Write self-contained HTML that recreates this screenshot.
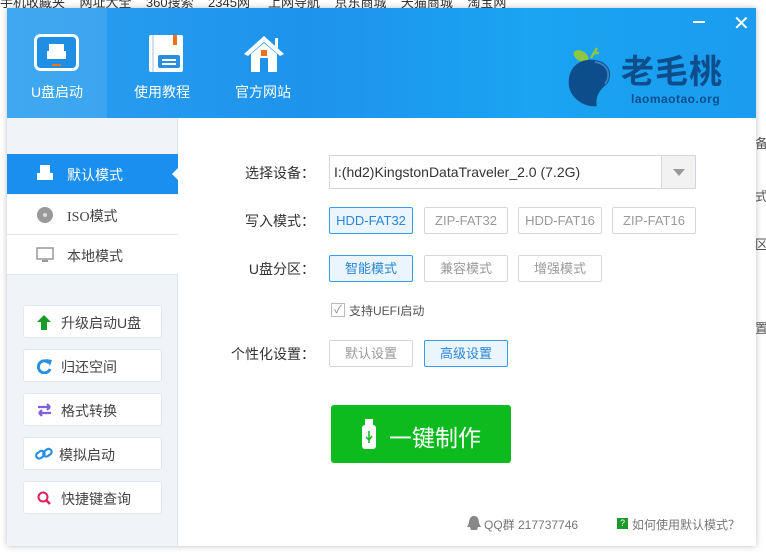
<!DOCTYPE html>
<html><head><meta charset="utf-8">
<style>
*{box-sizing:border-box;margin:0;padding:0}
body{width:766px;height:556px;overflow:hidden;background:#fff;font-family:"Liberation Sans","Noto Sans CJK SC",sans-serif;position:relative;color:#333}
.bm{position:absolute;top:-8px;left:0;font-size:13px;color:#333;white-space:nowrap}
.win{position:absolute;left:7px;top:8px;width:749px;height:538px;background:#fff;box-shadow:0 0 6px rgba(0,0,0,.25)}
.hdr{position:absolute;left:0;top:0;width:749px;height:110px;background:linear-gradient(90deg,#2a9ff0,#1e93ec 40%,#1aa4f2 70%,#1b9cef)}
.tab{position:absolute;top:0;width:100px;height:110px;color:#fff;font-size:14px;text-align:center}
.tab span{position:absolute;top:74px;left:0;width:100%}
.side{position:absolute;left:0;top:110px;width:171px;height:428px;background:#f0f3f8;border-right:1px solid #dde3ea}
.mi{position:absolute;left:0;width:171px;height:40px;background:#fff;border-bottom:1px solid #e3e6ea;font-size:14px;color:#444}
.mi span{position:absolute;left:60px;top:11px}
.mi.act{background:#1b8fee;color:#fff;border:none}
.sb{position:absolute;left:16px;width:139px;height:33px;background:#fff;border:1px solid #e3e7ec;border-radius:3px;font-size:14px;color:#444}
.sb span{position:absolute;left:37px;top:7px}
.sb svg{position:absolute;left:13px;top:9px}
.lbl{position:absolute;font-size:14px;color:#333;text-align:right;width:110px}
.btn{position:absolute;height:27px;border:1px solid #d4d8dc;border-radius:2px;font-size:13px;color:#999;text-align:center;line-height:25px;background:#fff}
.btn.on{border-color:#3a9be8;background:#eaf5fd;color:#2a85d6}
</style></head><body>
<div class="bm">手机收藏夹 &nbsp;&nbsp;&nbsp;网址大全 &nbsp;&nbsp;&nbsp;360搜索 &nbsp;&nbsp;&nbsp;2345网 &nbsp;&nbsp;&nbsp;&nbsp;上网导航 &nbsp;&nbsp;&nbsp;京东商城 &nbsp;&nbsp;&nbsp;天猫商城 &nbsp;&nbsp;&nbsp;淘宝网</div>
<div style="position:absolute;left:755px;top:137px;font-size:13px;color:#555;line-height:13px">备</div>
<div style="position:absolute;left:755px;top:186px;font-size:13px;color:#555">式</div>
<div style="position:absolute;left:755px;top:234px;font-size:13px;color:#555">区</div>
<div style="position:absolute;left:755px;top:318px;font-size:13px;color:#555">置</div>
<div class="win">
<div class="hdr">
 <div class="tab" style="left:0;background:rgba(255,255,255,.1)">
  <svg style="position:absolute;left:27px;top:26px" width="45" height="38"><rect x="1.5" y="1.5" width="42" height="34" rx="5" fill="#1f8fe6" stroke="#fff" stroke-width="3"/><rect x="15" y="10" width="15" height="7" fill="#fff"/><rect x="13" y="17" width="19" height="8" fill="#fff"/><rect x="18" y="30" width="9" height="2" fill="#f07020"/></svg>
  <span>U盘启动</span></div>
 <div class="tab" style="left:105px">
  <svg style="position:absolute;left:37px;top:27px" width="34" height="37"><rect x="0" y="0" width="34" height="37" rx="2" fill="#fff"/><rect x="3" y="0" width="2" height="37" fill="#cfe0f0"/><rect x="24" y="0" width="4" height="10" fill="#f07020"/><rect x="9" y="20" width="22" height="13" rx="2" fill="#2a8fe0"/><rect x="13" y="24" width="14" height="2" fill="#fff"/><rect x="13" y="28" width="14" height="2" fill="#fff"/></svg>
  <span>使用教程</span></div>
 <div class="tab" style="left:206px">
  <svg style="position:absolute;left:29px;top:24px" width="44" height="42"><path d="M22 4 L2 22 L6 24 L22 10 L38 24 L42 22 Z" fill="#fff"/><rect x="33" y="6" width="3" height="10" fill="#fff"/><path d="M9 22 L22 11 L35 22 V40 H9Z" fill="#fff"/><rect x="18" y="26" width="8" height="14" fill="#1e93ec"/><rect x="19" y="18" width="6" height="6" fill="#f07020"/></svg>
  <span>官方网站</span></div>
 <div style="position:absolute;left:686px;top:13px;width:12px;height:2px;background:#fff"></div>
 <div style="position:absolute;left:726px;top:3px;color:#fff;font-size:20px">✕</div>
 <svg style="position:absolute;left:558px;top:32px" width="56" height="70"><ellipse cx="16" cy="16" rx="8" ry="5" fill="#8dc63f" transform="rotate(30 16 16)"/><path d="M26 18 L32 8 M29 13 L34 13" stroke="#8dc63f" stroke-width="2.5"/><path d="M30 20 C12 18 2 30 4 46 C6 60 22 68 32 66 C30 58 34 50 42 44 C48 36 46 22 30 20Z" fill="#0e4d8c"/><path d="M30 22 C44 24 46 36 40 44" stroke="#3a7fc0" stroke-width="2" fill="none"/></svg>
 <div style="position:absolute;left:614px;top:44px;color:#0e4d8c;font-size:33px;font-weight:bold;letter-spacing:1px;line-height:40px">老毛桃</div>
 <div style="position:absolute;left:624px;top:84px;color:#0e4d8c;font-size:12px;font-weight:bold;letter-spacing:.5px">laomaotao.org</div>
</div>
<div class="side">
 <div class="mi act" style="top:36px;height:40px"><svg style="position:absolute;left:29px;top:11px" width="18" height="17"><rect x="4" y="0" width="10" height="8" fill="#fff"/><rect x="1" y="8" width="16" height="7" fill="#fff"/></svg><span>默认模式</span><div style="position:absolute;right:0;top:14px;border:6px solid transparent;border-right-color:#fff;border-width:6px 6px 6px 0;"></div></div>
 <div class="mi" style="top:77px"><svg style="position:absolute;left:30px;top:12px" width="16" height="16"><circle cx="8" cy="8" r="8" fill="#999"/><circle cx="8" cy="8" r="2" fill="#ddd"/></svg><span style="font-family:'Liberation Serif','Noto Sans CJK SC',serif">ISO<span style="position:static;font-family:'Liberation Sans','Noto Sans CJK SC',sans-serif">模式</span></span></div>
 <div class="mi" style="top:117px"><svg style="position:absolute;left:29px;top:12px" width="18" height="16"><rect x="1" y="1" width="16" height="11" fill="none" stroke="#999" stroke-width="1.5"/><rect x="6" y="13" width="6" height="2" fill="#999"/></svg><span>本地模式</span></div>
 <div class="sb" style="top:187px"><svg width="14" height="15"><path d="M7 0 L14 7 H10 V15 H4 V7 H0Z" fill="#1a9a2a"/></svg><span>升级启动U盘</span></div>
 <div class="sb" style="top:231px"><svg width="15" height="15"><path d="M12 4 A6 6 0 1 0 13 10" stroke="#2a8fe0" stroke-width="3" fill="none"/><path d="M9 0 L15 1 L13 7Z" fill="#2a8fe0"/></svg><span>归还空间</span></div>
 <div class="sb" style="top:275px"><svg width="15" height="14"><path d="M1 4 H13 M10 1 L13 4 M14 10 H2 M5 7 L2 10 M5 13 L2 10 M10 7 L13 4" stroke="#8060d8" stroke-width="2.2" fill="none"/></svg><span>格式转换</span></div>
 <div class="sb" style="top:319px"><svg style="left:11px" width="18" height="14"><g stroke="#2a8fe0" stroke-width="2.2" fill="none"><rect x="1" y="5" width="9" height="6" rx="3" transform="rotate(-35 5 8)"/><rect x="8" y="3" width="9" height="6" rx="3" transform="rotate(-35 12 6)"/></g></svg><span style="left:35px">模拟启动</span></div>
 <div class="sb" style="top:363px"><svg width="14" height="14"><circle cx="6" cy="6" r="4.5" stroke="#e0205a" stroke-width="2" fill="none"/><path d="M9 9 L13 13" stroke="#e0205a" stroke-width="2.5"/></svg><span>快捷键查询</span></div>
</div>
<div class="lbl" style="left:198px;top:155px">选择设备：</div>
<div style="position:absolute;left:322px;top:147px;width:367px;height:34px;border:1px solid #d4d8dc;font-size:14px;color:#333;line-height:32px;padding-left:4px">I:(hd2)KingstonDataTraveler_2.0 (7.2G)<div style="position:absolute;right:0;top:0;width:34px;height:32px;background:#f2f2f2;border-left:1px solid #d4d8dc"><div style="position:absolute;left:11px;top:13px;border:6px solid transparent;border-top:7px solid #999;border-bottom:none"></div></div></div>
<div class="lbl" style="left:198px;top:203px">写入模式：</div>
<div class="btn on" style="left:322px;top:199px;width:84px">HDD-FAT32</div>
<div class="btn" style="left:417px;top:199px;width:84px">ZIP-FAT32</div>
<div class="btn" style="left:511px;top:199px;width:84px">HDD-FAT16</div>
<div class="btn" style="left:605px;top:199px;width:84px">ZIP-FAT16</div>
<div class="lbl" style="left:198px;top:251px">U盘分区：</div>
<div class="btn on" style="left:322px;top:247px;width:84px">智能模式</div>
<div class="btn" style="left:417px;top:247px;width:84px">兼容模式</div>
<div class="btn" style="left:511px;top:247px;width:84px">增强模式</div>
<div style="position:absolute;left:324px;top:295px;width:14px;height:14px;border:1px solid #bbb;font-size:11px;color:#888;line-height:12px;text-align:center">✓</div>
<div style="position:absolute;left:342px;top:294px;font-size:12px;color:#555">支持UEFI启动</div>
<div class="lbl" style="left:198px;top:336px">个性化设置：</div>
<div class="btn" style="left:322px;top:332px;width:84px">默认设置</div>
<div class="btn on" style="left:417px;top:332px;width:84px">高级设置</div>
<div style="position:absolute;left:324px;top:397px;width:180px;height:58px;background:#0dbb1f;border-radius:3px;color:#fff;font-size:23px">
 <svg style="position:absolute;left:31px;top:14px" width="14" height="30"><rect x="3" y="0" width="8" height="6" fill="#fff"/><rect x="0" y="6" width="14" height="24" rx="3" fill="#fff"/><path d="M7 12 V24 M4 18 L7 21 L10 17" stroke="#0dbb1f" stroke-width="1.5" fill="none"/></svg>
 <span style="position:absolute;left:58px;top:14px">一键制作</span></div>
<svg style="position:absolute;left:460px;top:508px" width="14" height="14"><path d="M7 0 C3 0 2 4 2 7 L0 11 L3 11 L4 14 L10 14 L11 11 L14 11 L12 7 C12 4 11 0 7 0Z" fill="#888"/></svg>
<div style="position:absolute;left:477px;top:508px;font-size:12px;color:#777">QQ群 217737746</div>
<div style="position:absolute;left:610px;top:510px;width:11px;height:11px;background:#1a9a2a;color:#fff;font-size:9px;text-align:center;line-height:11px">?</div>
<div style="position:absolute;left:625px;top:508px;font-size:12px;color:#777">如何使用默认模式？</div>
</div>
</body></html>
